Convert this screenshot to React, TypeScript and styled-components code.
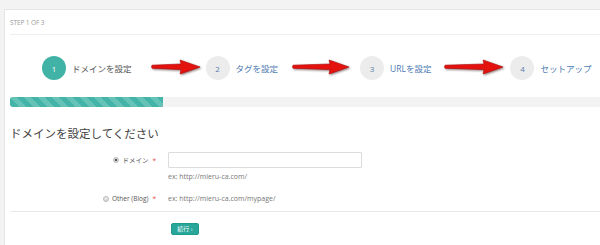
import React from "react";
import styled, { createGlobalStyle } from "styled-components";

const GlobalStyle = createGlobalStyle`
  html, body {
    margin: 0;
    padding: 0;
    background: #f3f3f3;
    overflow: hidden;
  }
  body {
    font-family: "Open Sans", "Noto Sans CJK JP", sans-serif;
  }
`;

const steps = [
  { no: 1, label: "ドメインを設定" },
  { no: 2, label: "タグを設定" },
  { no: 3, label: "URLを設定" },
  { no: 4, label: "セットアップ" },
];

// red annotation arrows drawn between the steps
const arrows = [
  { w: 50, ml: 19, mr: 5 },
  { w: 58, ml: 14, mr: 10 },
  { w: 60, ml: 13, mr: 6 },
];

const currentStep = 1;

const RedArrow = ({ w }: { w: number }) => (
  <ArrowSvg width={w} height={16} viewBox={`0 0 ${w} 16`}>
    <path
      d={`M1 6.2 L${w - 20} 5 L${w - 21} 1 L${w - 1} 8 L${w - 21} 15 L${w - 20} 10.6 L1 9.2 Q0 7.7 1 6.2 Z`}
      fill="#e3120f"
      stroke="#b40808"
      strokeWidth="0.6"
    />
  </ArrowSvg>
);

const App = () => {
  return (
    <>
      <GlobalStyle />
      <Panel>
        <Header>STEP 1 OF 3</Header>
        <StepsRow>
          {steps.map((s, i) => (
            <React.Fragment key={s.no}>
              <Step>
                <StepCircle $active={s.no === currentStep}>{s.no}</StepCircle>
                <StepLabel $active={s.no === currentStep}>{s.label}</StepLabel>
              </Step>
              {i < arrows.length && (
                <ArrowSlot $ml={arrows[i].ml} $mr={arrows[i].mr}>
                  <RedArrow w={arrows[i].w} />
                </ArrowSlot>
              )}
            </React.Fragment>
          ))}
        </StepsRow>
        <ProgressTrack>
          <ProgressFill style={{ width: `${(currentStep / steps.length) * 104}%` }} />
        </ProgressTrack>

        <Title>ドメインを設定してください</Title>

        <FormRow $mt={10}>
          <FieldLabel>
            <Radio $checked />
            <span>ドメイン</span>
            <Required>*</Required>
          </FieldLabel>
          <TextInput type="text" />
        </FormRow>
        <FormRow $mt={4}>
          <span />
          <Help>ex: http://mieru-ca.com/</Help>
        </FormRow>
        <FormRow $mt={13}>
          <FieldLabel>
            <Radio />
            <span>Other (Blog)</span>
            <Required>*</Required>
          </FieldLabel>
          <Help>ex: http://mieru-ca.com/mypage/</Help>
        </FormRow>

        <Divider />

        <FormRow $mt={11}>
          <span />
          <Actions>
            <NextButton>続行 ›</NextButton>
          </Actions>
        </FormRow>
      </Panel>
    </>
  );
};

export default App;

const Panel = styled.div`
  box-sizing: border-box;
  margin: 9px 0 0 4px;
  width: calc(100% - 4px);
  height: calc(100vh - 9px);
  padding-left: 5px;
  background: #fff;
  border-top: 1px solid #e6e6e6;
  border-left: 1px solid #e6e6e6;
  overflow: hidden;
`;

const Header = styled.div`
  height: 24px;
  display: flex;
  align-items: center;
  font-size: 6.5px;
  letter-spacing: -0.1px;
  color: #9b9b9b;
  border-bottom: 1px solid #efefef;
`;

const StepsRow = styled.div`
  display: flex;
  align-items: center;
  padding: 21px 0 0 32px;
  height: 24px;
`;

const Step = styled.div`
  display: flex;
  align-items: center;
  gap: 6px;
  flex-shrink: 0;
`;

const StepCircle = styled.div<{ $active?: boolean }>`
  width: 24px;
  height: 24px;
  border-radius: 50%;
  display: flex;
  align-items: center;
  justify-content: center;
  font-size: 8px;
  background: ${(p) => (p.$active ? "#40b3a6" : "#ececec")};
  color: ${(p) => (p.$active ? "#fff" : "#5a7dab")};
`;

const StepLabel = styled.span<{ $active?: boolean }>`
  font-size: 8.5px;
  white-space: nowrap;
  color: ${(p) => (p.$active ? "#555" : "#4d7bb2")};
`;

const ArrowSlot = styled.div<{ $ml: number; $mr: number }>`
  display: flex;
  align-items: center;
  margin: -3px ${(p) => p.$mr}px 0 ${(p) => p.$ml}px;
  flex-shrink: 0;
`;

const ArrowSvg = styled.svg`
  display: block;
  overflow: visible;
  filter: drop-shadow(1px 1.5px 0.8px rgba(40, 0, 0, 0.55));
`;

const ProgressTrack = styled.div`
  margin-top: 17px;
  height: 10px;
  background: #f3f3f3;
  border-radius: 2px 0 0 2px;
  overflow: hidden;
`;

const ProgressFill = styled.div`
  height: 100%;
  background-color: #43b4a7;
  background-image: linear-gradient(
    45deg,
    rgba(255, 255, 255, 0.18) 25%,
    transparent 25%,
    transparent 50%,
    rgba(255, 255, 255, 0.18) 50%,
    rgba(255, 255, 255, 0.18) 75%,
    transparent 75%,
    transparent
  );
  background-size: 14px 14px;
  border-radius: 2px 0 0 2px;
`;

const Title = styled.h2`
  margin: 19px 0 0;
  font-size: 11.5px;
  line-height: 16px;
  font-weight: 400;
  color: #444;
`;

const FormRow = styled.div<{ $mt: number }>`
  display: grid;
  grid-template-columns: 146px 1fr;
  column-gap: 12px;
  align-items: center;
  margin-top: ${(p) => p.$mt}px;
`;

const FieldLabel = styled.label`
  display: flex;
  justify-content: flex-end;
  align-items: center;
  gap: 2px;
  font-size: 6.5px;
  color: #555;
  white-space: nowrap;
`;

const Radio = styled.span<{ $checked?: boolean }>`
  width: 6px;
  height: 6px;
  box-sizing: border-box;
  border-radius: 50%;
  border: 1px solid #b8b8b8;
  background: ${(p) =>
    p.$checked
      ? "radial-gradient(circle, #555 0 1.4px, #e8e8e8 1.6px)"
      : "linear-gradient(#f2f2f2, #d6d6d6)"};
  margin-right: 1px;
`;

const Required = styled.span`
  color: #e24b4b;
  margin-left: 2px;
`;

const TextInput = styled.input`
  width: 194px;
  height: 16px;
  box-sizing: border-box;
  border: 1px solid #dcdcdc;
  border-radius: 1px;
  padding: 0 4px;
  outline: none;
`;

const Help = styled.span`
  font-size: 7px;
  line-height: 9px;
  color: #777;
`;

const Divider = styled.div`
  margin-top: 8px;
  height: 1px;
  background: #e8e8e8;
`;

const Actions = styled.div`
  display: flex;
  padding-left: 3px;
`;

const NextButton = styled.button`
  width: 28px;
  height: 12px;
  padding: 0;
  border: 1px solid #1f9a8e;
  border-radius: 2px;
  background: #27a699;
  color: #fff;
  font-family: "Open Sans", "Noto Sans CJK JP", sans-serif;
  font-size: 6px;
  line-height: 10px;
`;
